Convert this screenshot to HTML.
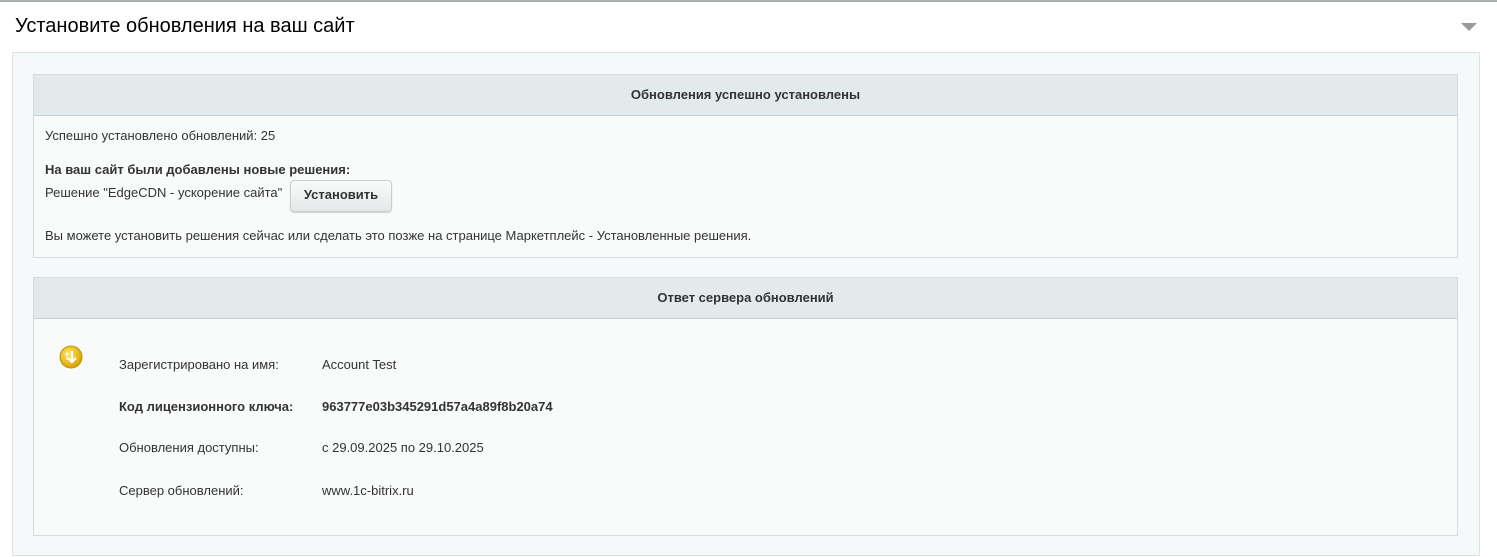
<!DOCTYPE html>
<html><head><meta charset="utf-8"><style>
body{margin:0;width:1497px;height:557px;background:#fff;font-family:"Liberation Sans",Arial,sans-serif;color:#333;overflow:hidden;position:relative}
.top{position:absolute;left:0;top:0;width:1497px;height:2px;background:#a8b0b0}
.title{position:absolute;left:15px;top:15px;font-size:20px;color:#000}
.arrow{position:absolute;left:1461px;top:23px;width:0;height:0;border-left:8px solid transparent;border-right:8px solid transparent;border-top:8px solid #999}
.outer{position:absolute;left:12px;top:52px;width:1466px;height:502px;background:#f5f9f9;border:1px solid #dbe3e3}
.box{position:absolute;left:20px;width:1423px;background:#f9fbfb;border:1px solid #d5dcdc}
.hd{height:40px;line-height:40px;background:#e3eaeb;border-bottom:1px solid #c5cfcf;text-align:center;font-weight:bold;font-size:13px;color:#333}
.t{position:absolute;font-size:13px;color:#333}
.b{font-weight:bold}
.btn{position:absolute;left:256px;top:105px;width:100px;height:30px;border:1px solid #c8cdcd;border-radius:4px;background:linear-gradient(#fafbfb,#e4e8e8);box-shadow:0 1px 1px rgba(0,0,0,.15);font-weight:bold;font-size:13px;line-height:28px;text-align:center;color:#333}
</style></head><body>
<div class="top"></div>
<div class="title">Установите обновления на ваш сайт</div>
<div class="arrow"></div>
<div class="outer">
 <div class="box" style="top:21px;height:182px">
  <div class="hd">Обновления успешно установлены</div>
  <div class="t" style="left:11px;top:53px">Успешно установлено обновлений: 25</div>
  <div class="t b" style="left:11px;top:87px">На ваш сайт были добавлены новые решения:</div>
  <div class="t" style="left:11px;top:110px">Решение "EdgeCDN - ускорение сайта"</div>
  <div class="btn">Установить</div>
  <div class="t" style="left:11px;top:153px">Вы можете установить решения сейчас или сделать это позже на странице Маркетплейс - Установленные решения.</div>
 </div>
 <div class="box" style="top:224px;height:257px">
  <div class="hd">Ответ сервера обновлений</div>
  <svg style="position:absolute;left:25px;top:67px" width="24" height="24" viewBox="0 0 24 24"><defs><radialGradient id="g" cx="40%" cy="35%" r="65%"><stop offset="0" stop-color="#ffe866"/><stop offset="1" stop-color="#d9a300"/></radialGradient></defs><circle cx="12" cy="12" r="11" fill="url(#g)" stroke="#c29200"/><path d="M13 6v11M9 13l4 4 4-4" stroke="#fff" stroke-width="2.2" fill="none"/><path d="M8 15V8M6.5 9.5L8 8l1.5 1.5" stroke="#fff" stroke-width="1" fill="none"/></svg>
  <div class="t" style="left:85px;top:79px">Зарегистрировано на имя:</div>
  <div class="t" style="left:288px;top:79px">Account Test</div>
  <div class="t b" style="left:85px;top:121px">Код лицензионного ключа:</div>
  <div class="t b" style="left:288px;top:121px">963777e03b345291d57a4a89f8b20a74</div>
  <div class="t" style="left:85px;top:162px">Обновления доступны:</div>
  <div class="t" style="left:288px;top:162px">с 29.09.2025 по 29.10.2025</div>
  <div class="t" style="left:85px;top:205px">Сервер обновлений:</div>
  <div class="t" style="left:288px;top:205px">www.1c-bitrix.ru</div>
 </div>
</div>
</body></html>
